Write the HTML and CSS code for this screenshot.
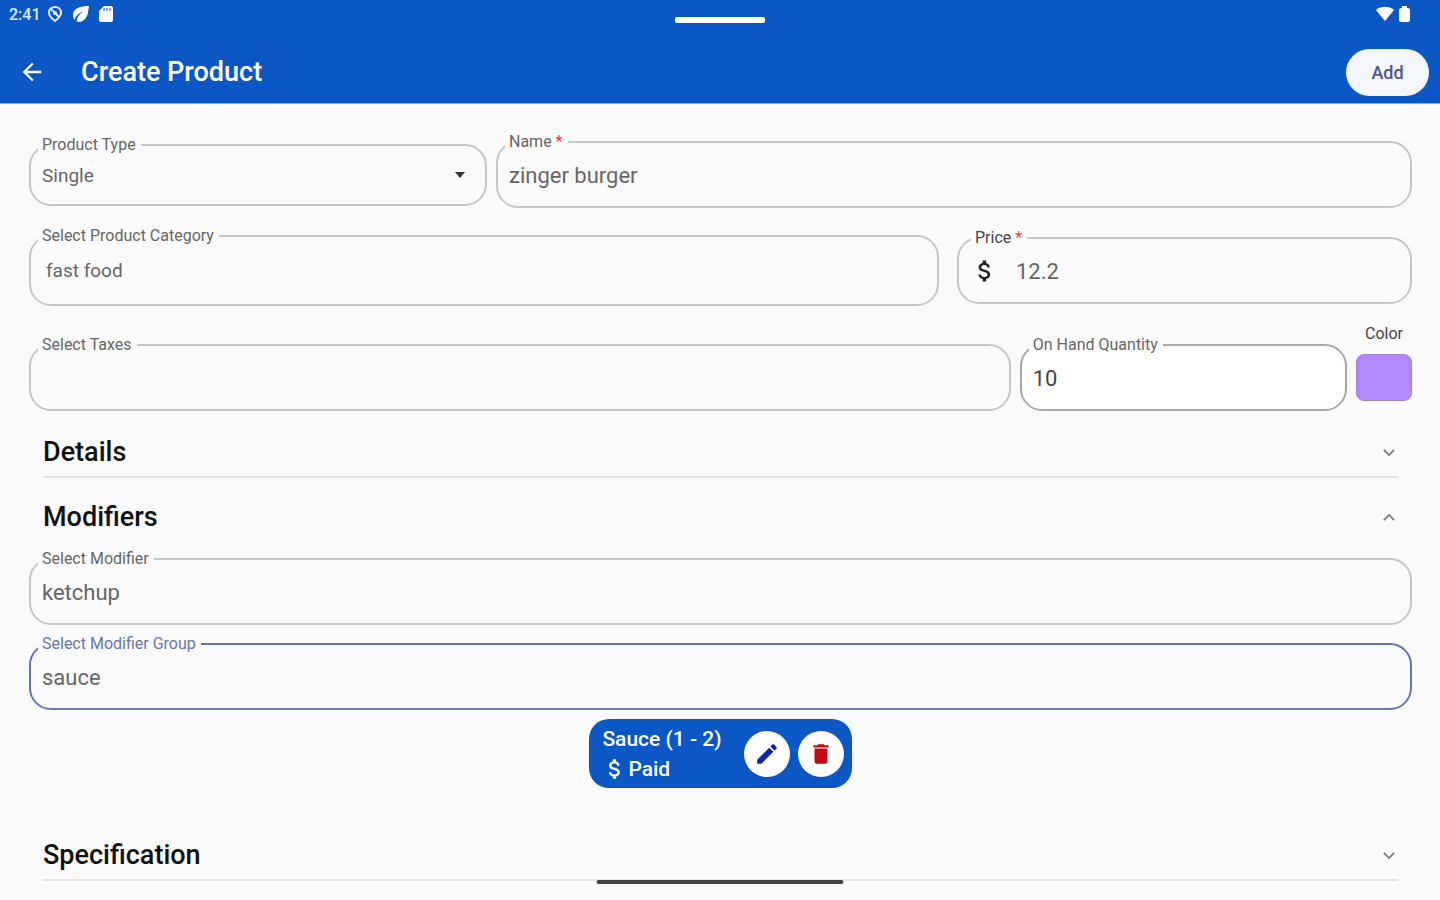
FILE: index.html
```html
<!DOCTYPE html>
<html lang="en">
<head>
    <meta charset="UTF-8">
    <meta name="viewport" content="width=device-width, initial-scale=1.0">
    <title>Create Product</title>
    <link rel="stylesheet" href="styles.css">
</head>
<body>
    <header>
        <div class="status-bar">
            <div class="status-left">
                <span>2:41</span>
                <svg width="16" height="18" viewBox="0 0 16 18"><path fill="none" stroke="#e4eafa" stroke-width="2" d="M8 2C4.500 2 2 4.200 2 7.500c0 4 3 6.300 6 8.500 3-2.200 6-4.500 6-8.500C14 4.200 11.500 2 8 2z"/><path stroke="#e4eafa" stroke-width="2" d="M4 4l8 8"/><circle cx="8" cy="8" r="2" fill="#e4eafa"/></svg>
                <svg width="18" height="18" viewBox="0 0 18 18"><path fill="#fff" d="M17 1C11 1 1 2 1 10c0 2 .5 3.500 1.500 4.700C4 10.500 7 8 11 6.500 7.500 9 5 12 4.500 16.300 6 17.300 8 17.200 9.500 16.500 16 14 16 7 17 1z"/></svg>
                <svg width="14" height="18" viewBox="0 0 14 18"><path fill="#fff" d="M5 1h7c1 0 2 1 2 2v12c0 1-1 2-2 2H2c-1 0-2-1-2-2V6z"/><path stroke="#0b57c5" stroke-width="1" d="M5 3v3M8 3v3M11 3v3"/></svg>
            </div>
            <div class="status-right">
                <svg width="18" height="16" viewBox="0 0 18 16"><path fill="#fff" d="M9 15L0 4C5-.3 13-.3 18 4z"/></svg>
                <svg width="11" height="18" viewBox="0 0 11 18"><path fill="#fff" d="M3 1h5v2h1c1 0 2 1 2 2v10c0 1-1 2-2 2H2c-1 0-2-1-2-2V5c0-1 1-2 2-2h1z"/></svg>
            </div>
            <div class="handle"></div>
        </div>
        <div class="app-bar">
            <button class="back" aria-label="Back">
                <svg width="28" height="28" viewBox="0 0 24 24"><path fill="#fff" d="M20 11H7.830l5.590-5.590L12 4l-8 8 8 8 1.410-1.410L7.830 13H20z"/></svg>
            </button>
            <h1>Create Product</h1>
            <button class="add">Add</button>
        </div>
    </header>

    <main>
        <div class="row type-name">
            <fieldset class="field compact">
                <legend><label for="productType">Product Type</label></legend>
                <div class="control">
                    <select id="productType">
                        <option>Single</option>
                    </select>
                    <svg class="caret" width="10" height="6" viewBox="0 0 10 6"><path fill="#333" d="M0 0h10L5 6z"/></svg>
                </div>
            </fieldset>
            <fieldset class="field">
                <legend><label for="name">Name <span class="required">*</span></label></legend>
                <div class="control">
                    <input type="text" id="name" value="zinger burger">
                </div>
            </fieldset>
        </div>

        <div class="row category-price">
            <fieldset class="field tall">
                <legend><label for="category">Select Product Category</label></legend>
                <div class="control">
                    <input type="text" id="category" value="fast food">
                </div>
            </fieldset>
            <fieldset class="field price">
                <legend><label for="price">Price <span class="required">*</span></label></legend>
                <div class="control">
                    <svg width="28" height="28" viewBox="0 0 24 24"><path fill="#222" d="M11.800 10.900c-2.270-.59-3-1.200-3-2.150 0-1.090 1.010-1.850 2.700-1.850 1.780 0 2.440.85 2.500 2.100h2.210c-.07-1.720-1.120-3.300-3.210-3.810V3h-3v2.160c-1.940.42-3.500 1.680-3.500 3.610 0 2.310 1.910 3.460 4.700 4.130 2.500.6 3 1.480 3 2.410 0 .69-.49 1.790-2.700 1.790-2.060 0-2.870-.92-2.980-2.100h-2.200c.12 2.190 1.760 3.420 3.680 3.830V21h3v-2.150c1.950-.37 3.500-1.500 3.500-3.550 0-2.840-2.430-3.810-4.700-4.400z"/></svg>
                    <input type="text" id="price" value="12.2">
                </div>
            </fieldset>
        </div>

        <div class="row taxes-quantity">
            <fieldset class="field">
                <legend><label for="taxes">Select Taxes</label></legend>
                <div class="control">
                    <input type="text" id="taxes">
                </div>
            </fieldset>
            <fieldset class="field filled">
                <legend><label for="quantity">On Hand Quantity</label></legend>
                <div class="control">
                    <input type="text" id="quantity" value="10">
                </div>
            </fieldset>
            <div class="color">
                <label for="color">Color</label>
                <button id="color" class="swatch"></button>
            </div>
        </div>

        <section>
            <h2>
                <button class="section-header" aria-expanded="false">
                    Details
                    <svg width="12" height="9" viewBox="0 0 14 10"><path fill="none" stroke="#777" stroke-width="2" d="M1 2l6 6 6-6"/></svg>
                </button>
            </h2>
        </section>

        <section>
            <h2>
                <button class="section-header open" aria-expanded="true">
                    Modifiers
                    <svg width="12" height="9" viewBox="0 0 14 10"><path fill="none" stroke="#777" stroke-width="2" d="M1 8l6-6 6 6"/></svg>
                </button>
            </h2>
            <div class="section-body">
                <fieldset class="field">
                    <legend><label for="modifier">Select Modifier</label></legend>
                    <div class="control">
                        <input type="text" id="modifier" value="ketchup">
                    </div>
                </fieldset>
                <fieldset class="field active">
                    <legend><label for="modifierGroup">Select Modifier Group</label></legend>
                    <div class="control">
                        <input type="text" id="modifierGroup" value="sauce">
                    </div>
                </fieldset>
                <div class="chip">
                    <div class="chip-text">
                        <div>Sauce (1 - 2)</div>
                        <div class="paid">
                            <svg width="26" height="26" viewBox="0 0 24 24"><path fill="#fff" d="M11.800 10.900c-2.270-.59-3-1.200-3-2.150 0-1.090 1.010-1.850 2.700-1.850 1.780 0 2.440.85 2.500 2.100h2.210c-.07-1.720-1.120-3.300-3.210-3.810V3h-3v2.160c-1.940.42-3.500 1.680-3.500 3.610 0 2.310 1.910 3.460 4.700 4.130 2.500.6 3 1.480 3 2.410 0 .69-.49 1.790-2.700 1.790-2.060 0-2.870-.92-2.980-2.100h-2.200c.12 2.190 1.760 3.420 3.680 3.830V21h3v-2.150c1.950-.37 3.500-1.500 3.500-3.550 0-2.840-2.430-3.810-4.700-4.400z"/></svg>
                            <span>Paid</span>
                        </div>
                    </div>
                    <button class="round" aria-label="Edit">
                        <svg width="26" height="26" viewBox="0 0 24 24"><path fill="#0a22b4" d="M3 17.250V21h3.750L17.810 9.940l-3.750-3.750L3 17.250zM20.710 7.040c.39-.39.39-1.020 0-1.410l-2.340-2.340c-.39-.39-1.020-.39-1.410 0l-1.830 1.830 3.750 3.750 1.830-1.830z"/></svg>
                    </button>
                    <button class="round" aria-label="Delete">
                        <svg width="26" height="26" viewBox="0 0 24 24"><path fill="#c00b12" d="M6 19c0 1.100.9 2 2 2h8c1.100 0 2-.9 2-2V7H6v12zM19 4h-3.500l-1-1h-5l-1 1H5v2h14V4z"/></svg>
                    </button>
                </div>
            </div>
        </section>

        <section>
            <h2>
                <button class="section-header" aria-expanded="false">
                    Specification
                    <svg width="12" height="9" viewBox="0 0 14 10"><path fill="none" stroke="#777" stroke-width="2" d="M1 2l6 6 6-6"/></svg>
                </button>
            </h2>
        </section>
    </main>

    <div class="home-indicator"></div>
</body>
</html>
```

FILE: styles.css
```css
* {
    box-sizing: border-box;
}
body {
    font-family: Roboto, "Liberation Sans", sans-serif;
    margin: 0;
    background-color: #fafafa;
    color: #111;
}
button {
    font-family: inherit;
    border: none;
    padding: 0;
    cursor: pointer;
}
svg {
    display: block;
    flex: none;
}

/* Top bar */
header {
    background: #0b57c5;
    color: #fff;
    border-bottom: 1px solid #8f9fe0;
}
.status-bar {
    position: relative;
    display: flex;
    justify-content: space-between;
    height: 41px;
    padding: 0 30px 13px 9px;
}
.status-left, .status-right {
    display: flex;
    align-items: center;
    font-size: 16px;
    font-weight: 500;
}
.status-left {
    gap: 9px;
    color: #e4eafa;
}
.status-left span {
    margin-right: -3px;
}
.status-right {
    gap: 5px;
}
.handle {
    position: absolute;
    top: 17px;
    left: 50%;
    width: 90px;
    height: 6px;
    transform: translateX(-50%);
    background: #fff;
    border-radius: 2px;
}
.app-bar {
    display: flex;
    align-items: center;
    height: 62px;
    padding: 0 11px 0 18px;
}
.back {
    background: none;
    margin-right: 35px;
}
h1 {
    flex: 1;
    margin: 0;
    font-size: 27px;
    font-weight: 500;
}
.add {
    width: 83px;
    height: 47px;
    border-radius: 24px;
    background: #f5f5fc;
    color: #4c5a8c;
    font-size: 18px;
    font-weight: 500;
}

/* Form */
main {
    padding: 28px 28px 0 29px;
}
.row {
    display: grid;
    align-items: center;
    gap: 9px;
    margin-bottom: 18px;
}
.type-name {
    grid-template-columns: 1fr 2fr;
}
.category-price {
    grid-template-columns: 2fr 1fr;
    gap: 18px;
}
.taxes-quantity {
    grid-template-columns: 3fr 1fr 56px;
    align-items: end;
    margin-bottom: 17px;
}
.field {
    min-width: 0;
    margin: 0;
    padding: 0 12px 8px 7px;
    border: 2px solid #c6c6c6;
    border-radius: 22px;
}
.field legend {
    padding: 0 5px 0 4px;
    font-size: 16px;
    line-height: 20px;
    color: #666;
}
.field label {
    display: block;
}
.required {
    color: #f03a30;
}
.control {
    display: flex;
    align-items: center;
    padding-left: 4px;
}
.control input, .control select {
    flex: 1;
    width: 100%;
    min-width: 0;
    height: 46px;
    padding: 0;
    border: none;
    outline: none;
    appearance: none;
    background: none;
    font-family: inherit;
    font-size: 22px;
    color: #666;
}
.compact {
    padding-right: 20px;
}
.compact .control select {
    height: 41px;
    font-size: 19px;
}
.tall {
    padding-bottom: 10px;
}
.tall .control {
    padding-left: 8px;
}
.tall .control input {
    height: 48px;
    font-size: 19px;
}
.price {
    padding-left: 12px;
}
.price label {
    color: #444;
}
.price .control {
    gap: 17px;
    padding-left: 0;
}
.filled {
    background: #fff;
    border-color: #a8a8a8;
}
.filled .control input {
    color: #444;
}
.active {
    border-color: #6676ac;
}
.active legend {
    color: #6676ac;
}
.color {
    display: flex;
    flex-direction: column;
    align-items: center;
    gap: 11px;
    padding-bottom: 10px;
    font-size: 16px;
    line-height: 19px;
    color: #444;
}
.swatch {
    width: 56px;
    height: 47px;
    border: 1px solid #9a86c4;
    border-radius: 8px;
    background: #b388ff;
}

/* Sections */
section {
    margin-bottom: 15px;
}
h2 {
    margin: 0 14px;
}
.section-header {
    display: flex;
    align-items: center;
    justify-content: space-between;
    width: 100%;
    height: 50px;
    padding-right: 3px;
    border-bottom: 2px solid #e4e4e4;
    background: none;
    color: #111;
    font-size: 27px;
    font-weight: 500;
}
.section-header.open {
    height: 48px;
    border-bottom: none;
}
.section-body {
    display: flex;
    flex-direction: column;
    gap: 9px;
    padding: 8px 0 28px;
}
.chip {
    display: flex;
    align-items: center;
    align-self: center;
    gap: 8px;
    height: 69px;
    padding: 0 8px 0 13px;
    border-radius: 20px;
    background: #0b57c5;
    color: #fff;
    font-size: 21px;
    font-weight: 500;
    line-height: 30px;
}
.chip-text {
    margin-right: 14px;
}
.paid {
    display: flex;
    align-items: center;
}
.round {
    display: flex;
    align-items: center;
    justify-content: center;
    width: 46px;
    height: 46px;
    border-radius: 50%;
    background: #fff;
}
.home-indicator {
    position: fixed;
    bottom: 16px;
    left: 50%;
    width: 247px;
    height: 4px;
    transform: translateX(-50%);
    border-radius: 2px;
    background: #444;
}
```
